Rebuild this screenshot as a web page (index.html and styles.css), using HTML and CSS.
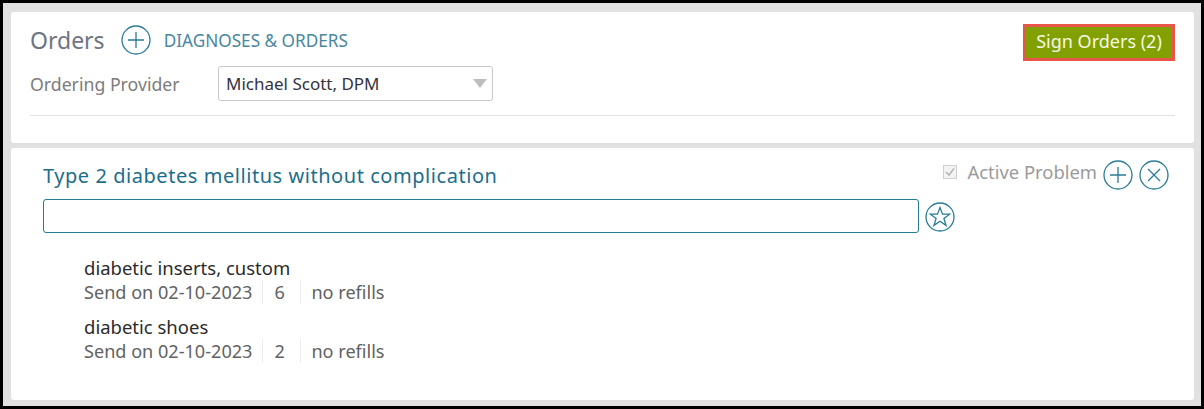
FILE: index.html
```html
<!DOCTYPE html>
<html lang="en">
<head>
	<meta charset="UTF-8">
	<title>Orders</title>
	<link rel="stylesheet" href="styles.css">
</head>

<body>
<div class="frame">
	<div class="panel orders">
		<div class="orders-top">
			<div class="title-row">
				<h1 class="title">Orders</h1>
				<svg class="icon" viewBox="0 0 30 30"><circle cx="15" cy="15" r="14"/><path d="M7 15H23M15 7V23"/></svg>
				<a class="link" href="#">DIAGNOSES &amp; ORDERS</a>
			</div>
			<a class="sign" href="#">Sign Orders (2)</a>
		</div>
		<div class="provider-row">
			<span class="provider-label">Ordering Provider</span>
			<div class="select">
				<span>Michael Scott, DPM</span>
				<i class="arrow"></i>
			</div>
		</div>
	</div>
	<div class="panel problem">
		<div class="problem-head">
			<h2 class="problem-title">Type 2 diabetes mellitus without complication</h2>
			<div class="problem-actions">
				<svg class="check" viewBox="0 0 14 14"><rect x="0.5" y="0.5" width="13" height="13"/><path d="M3 7L6 10L11 3.5"/></svg>
				<span class="active-label">Active Problem</span>
				<svg class="icon" viewBox="0 0 30 30"><circle cx="15" cy="15" r="14"/><path d="M7 15H23M15 7V23"/></svg>
				<svg class="icon" viewBox="0 0 30 30"><circle cx="15" cy="15" r="14"/><path d="M9 9L21 21M21 9L9 21"/></svg>
			</div>
		</div>
		<div class="search-row">
			<input class="search" type="text">
			<svg class="icon star" viewBox="0 0 30 30"><circle cx="15" cy="15" r="14"/><path d="M15 5.5L17.5 12.2H24.6L18.9 16.5L21 23.4L15 19.3L9 23.4L11.1 16.5L5.4 12.2H12.5Z"/></svg>
		</div>
		<ul class="items">
			<li>
				<div class="item-name">diabetic inserts, custom</div>
				<div class="item-info"><span>Send on 02-10-2023</span><span class="qty">6</span><span class="refills">no refills</span></div>
			</li>
			<li>
				<div class="item-name">diabetic shoes</div>
				<div class="item-info"><span>Send on 02-10-2023</span><span class="qty">2</span><span class="refills">no refills</span></div>
			</li>
		</ul>
	</div>
</div>
</body>
</html>
```

FILE: styles.css
```css
html, body {
	margin: 0;
	padding: 0;
	background: #000;
}
body {
	padding: 3px;
	font-family: "Noto Sans", "Open Sans", sans-serif;
}
.frame {
	width: 1198px;
	height: 403px;
	box-sizing: border-box;
	background: #e1e1e1;
	padding: 9px 7px 6px 8px;
	display: flex;
	flex-direction: column;
	gap: 5px;
}
.panel {
	background: #fff;
	border-radius: 3px;
}
.orders {
	height: 131px;
	flex: none;
	padding: 11px 19px 0 19px;
	box-sizing: border-box;
}
.orders-top {
	display: flex;
	justify-content: space-between;
	align-items: flex-start;
	height: 43px;
}
.title-row {
	display: flex;
	align-items: center;
	height: 32px;
	margin-top: 1px;
}
.title {
	margin: 0 16px 0 0;
	font-size: 23px;
	font-weight: 400;
	color: #6d7586;
}
.icon {
	width: 30px;
	height: 30px;
	flex: none;
	fill: none;
	stroke: #2a7b96;
	stroke-width: 1.3;
}
.link {
	margin-left: 13px;
	font-size: 17.2px;
	color: #4a87a1;
	text-decoration: none;
}
.provider-row {
	display: flex;
	align-items: center;
	padding-bottom: 14px;
	border-bottom: 1px solid #e3e3e3;
}
.provider-label {
	width: 188px;
	font-size: 17.7px;
	color: #7c7c7c;
}
.select {
	width: 275px;
	height: 35px;
	box-sizing: border-box;
	border: 1px solid #c8c8c8;
	border-radius: 3px;
	padding: 0 5px 0 7px;
	display: flex;
	align-items: center;
	justify-content: space-between;
	font-size: 17px;
	color: #333340;
}
.arrow {
	width: 0;
	height: 0;
	border-left: 7px solid transparent;
	border-right: 7px solid transparent;
	border-top: 9px solid #bdbdbd;
}
.sign {
	flex: none;
	width: 152px;
	height: 37px;
	margin-top: 1px;
	box-sizing: border-box;
	border: 3px solid #e8564b;
	background: #82a100;
	color: #f6f8e6;
	font-size: 18px;
	line-height: 29px;
	text-align: center;
	text-decoration: none;
}
.problem {
	flex: 1;
	padding: 12px 25px 0 32px;
}
.problem-head {
	display: flex;
	justify-content: space-between;
	align-items: center;
	height: 30px;
}
.problem-title {
	margin: 0;
	font-size: 20px;
	font-weight: 400;
	color: #1c6e8c;
	letter-spacing: 0.55px;
}
.search-row {
	display: flex;
	align-items: center;
	gap: 6px;
	margin-top: 9px;
}
.star {
	margin-top: 2px;
}
.search {
	width: 876px;
	height: 34px;
	box-sizing: border-box;
	border: 1px solid #2a7b96;
	border-radius: 3px;
	padding: 0;
	outline: none;
}
.items {
	list-style: none;
	margin: 23px 0 0 41px;
	padding: 0;
}
.items li {
	margin-bottom: 11px;
}
.item-name {
	font-size: 18.5px;
	line-height: 24px;
	color: #2b2b2b;
}
.item-info {
	display: flex;
	font-size: 18.1px;
	line-height: 24px;
	color: #626262;
}
.qty {
	width: 38px;
	margin-left: 10px;
	padding-left: 11px;
	box-sizing: border-box;
	border-left: 1px solid #ececec;
}
.refills {
	padding-left: 10px;
	border-left: 1px solid #ececec;
}
.problem-actions {
	display: flex;
	align-items: center;
}
.check {
	width: 14px;
	height: 14px;
	fill: #f3f3f3;
	stroke: #cfcfcf;
	margin: 0 10px 6px 0;
}
.check path {
	fill: none;
	stroke: #b5b5b5;
	stroke-width: 1.5;
}
.active-label {
	font-size: 18.4px;
	color: #9a9a9a;
	white-space: nowrap;
	margin: 0 6px 8px 0;
}
.problem-actions .icon + .icon {
	margin-left: 6px;
}
```
